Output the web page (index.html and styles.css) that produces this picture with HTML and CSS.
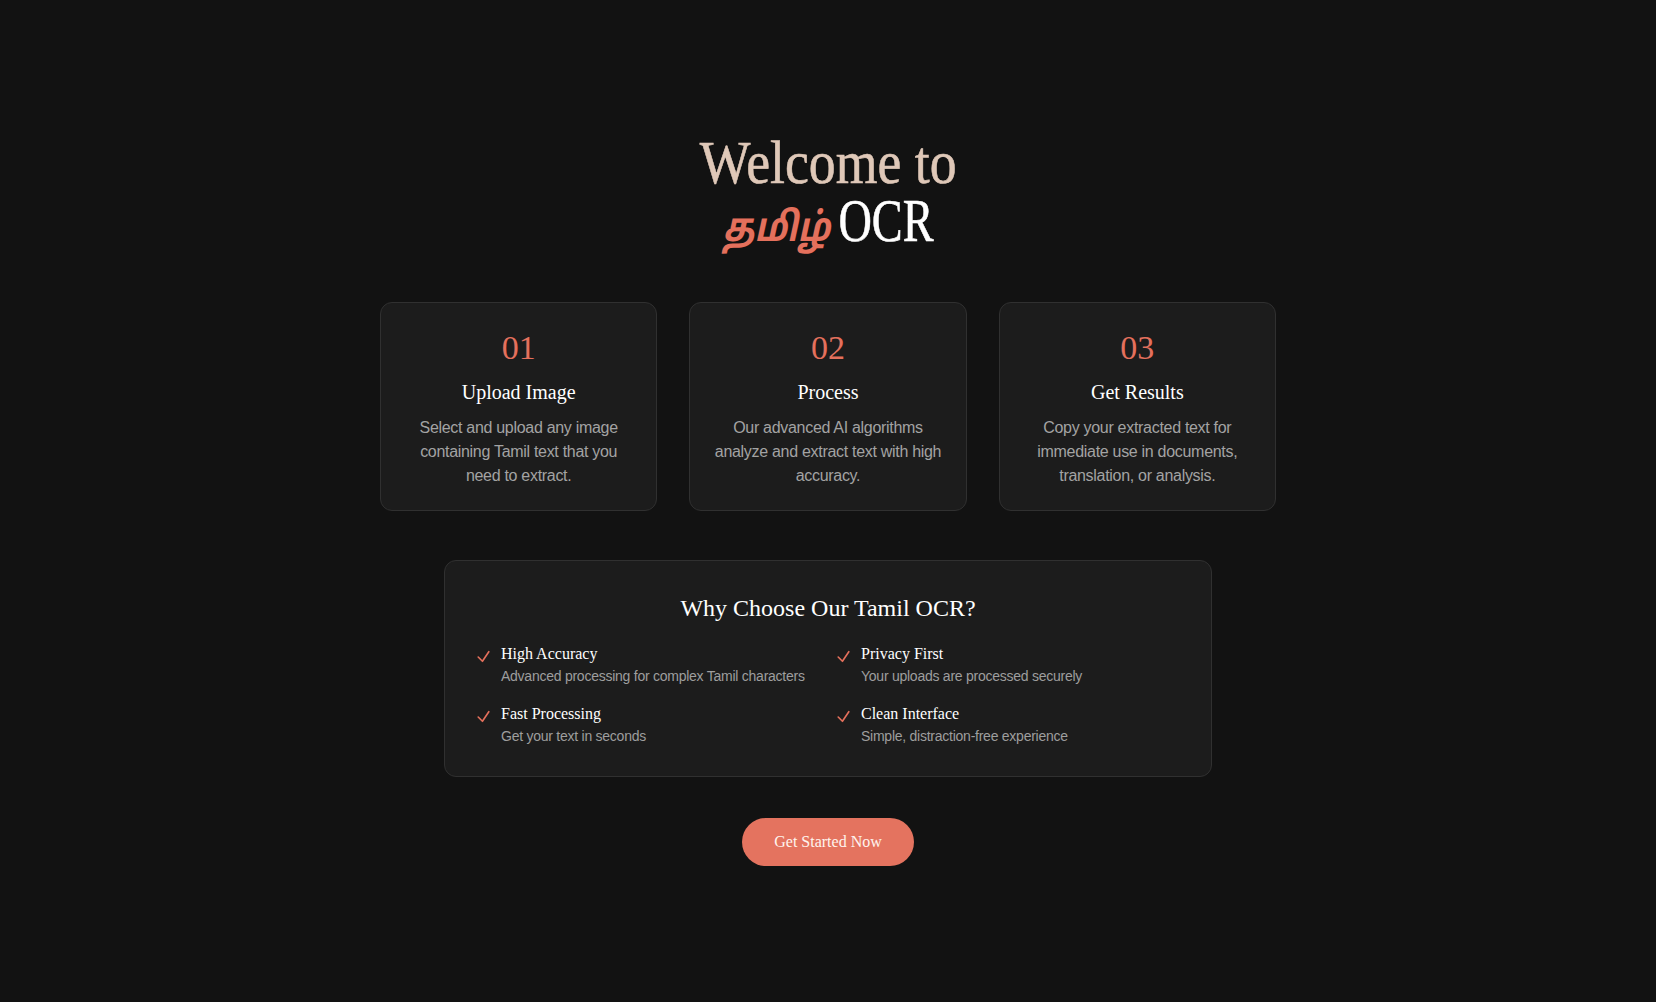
FILE: index.html
```html
<!DOCTYPE html>
<html lang="en">
<head>
<meta charset="utf-8">
<title>Tamil OCR</title>
<link rel="stylesheet" href="styles.css">
</head>
<body>
<main class="page">
  <h1 class="hero">
    <span class="hero-line hero-welcome">Welcome to</span>
    <span class="hero-line"><span class="tamil">தமிழ்</span><span class="ocr">OCR</span></span>
  </h1>

  <section class="steps">
    <div class="step">
      <div class="step-num">01</div>
      <h3 class="step-title">Upload Image</h3>
      <p class="step-text">Select and upload any image containing Tamil text that you need to extract.</p>
    </div>
    <div class="step">
      <div class="step-num">02</div>
      <h3 class="step-title">Process</h3>
      <p class="step-text">Our advanced AI algorithms analyze and extract text with high accuracy.</p>
    </div>
    <div class="step">
      <div class="step-num">03</div>
      <h3 class="step-title">Get Results</h3>
      <p class="step-text">Copy your extracted text for immediate use in documents, translation, or analysis.</p>
    </div>
  </section>

  <section class="why">
    <h2 class="why-title">Why Choose Our Tamil OCR?</h2>
    <div class="why-grid">
      <div class="feature">
        <svg class="check" viewBox="0 0 24 24"><path d="M4.5 12.75l6 6 9-13.5"/></svg>
        <div>
          <div class="feature-title">High Accuracy</div>
          <div class="feature-text">Advanced processing for complex Tamil characters</div>
        </div>
      </div>
      <div class="feature">
        <svg class="check" viewBox="0 0 24 24"><path d="M4.5 12.75l6 6 9-13.5"/></svg>
        <div>
          <div class="feature-title">Privacy First</div>
          <div class="feature-text">Your uploads are processed securely</div>
        </div>
      </div>
      <div class="feature">
        <svg class="check" viewBox="0 0 24 24"><path d="M4.5 12.75l6 6 9-13.5"/></svg>
        <div>
          <div class="feature-title">Fast Processing</div>
          <div class="feature-text">Get your text in seconds</div>
        </div>
      </div>
      <div class="feature">
        <svg class="check" viewBox="0 0 24 24"><path d="M4.5 12.75l6 6 9-13.5"/></svg>
        <div>
          <div class="feature-title">Clean Interface</div>
          <div class="feature-text">Simple, distraction-free experience</div>
        </div>
      </div>
    </div>
  </section>

  <div class="cta-wrap">
    <button class="cta">Get Started Now</button>
  </div>
</main>
</body>
</html>
```

FILE: styles.css
```css
* { box-sizing: border-box; }

html, body {
  margin: 0;
  padding: 0;
  background: #121212;
}

body {
  font-family: "Liberation Serif", "Times New Roman", serif;
  color: #f5f5f5;
}

.page {
  padding-top: 133px;
  display: flex;
  flex-direction: column;
  align-items: center;
}

.hero {
  margin: 0 0 53px;
  font-weight: 400;
  text-align: center;
  font-size: 62px;
  line-height: 58px;
}

.hero-line {
  display: block;
  height: 58px;
  white-space: nowrap;
  transform: scaleX(0.867);
  -webkit-text-stroke: 0.6px currentColor;
}

.hero-welcome {
  color: #dfc8b8;
}

.tamil {
  display: inline-block;
  line-height: 44px;
  font-family: "Noto Sans Tamil", "Lohit Tamil", "Noto Serif Tamil", "Noto Sans", sans-serif;
  font-style: italic;
  font-weight: 700;
  font-size: 40px;
  color: #e4705c;
  -webkit-text-stroke: 0;
}

.ocr {
  display: inline-block;
  line-height: 50px;
  margin-left: 10px;
  margin-right: -18px;
  color: #ffffff;
  transform: scaleX(0.86);
  transform-origin: left center;
}

.steps {
  width: 896px;
  display: grid;
  grid-template-columns: repeat(3, 1fr);
  gap: 32px;
}

.step {
  background: #1c1c1c;
  border: 1px solid #303030;
  border-radius: 12px;
  padding: 25px 22px 22px;
  text-align: center;
}

.step-num {
  font-size: 34px;
  line-height: 40px;
  color: #e4705c;
  margin-bottom: 10px;
}

.step-title {
  margin: 0 0 10px;
  font-size: 20px;
  line-height: 28px;
  font-weight: 400;
  color: #ffffff;
}

.step-text {
  margin: 0;
  font-family: "Liberation Sans", Arial, sans-serif;
  font-size: 16px;
  line-height: 24px;
  letter-spacing: -0.3px;
  color: #a3a3a3;
}

.why {
  width: 768px;
  margin-top: 49px;
  background: #1c1c1c;
  border: 1px solid #303030;
  border-radius: 12px;
  padding: 31px 31px 30px;
}

.why-title {
  margin: 0 0 18px;
  text-align: center;
  font-size: 24px;
  line-height: 32px;
  font-weight: 400;
  color: #ffffff;
}

.why-grid {
  display: grid;
  grid-template-columns: 1fr 1fr;
  column-gap: 16px;
  row-gap: 16px;
}

.feature {
  display: flex;
  align-items: flex-start;
  gap: 8px;
  margin-left: -1px;
}

.check {
  width: 17px;
  height: 17px;
  flex: none;
  margin-top: 6px;
  margin-right: 1px;
  fill: none;
  stroke: #e4705c;
  stroke-width: 2.3;
  stroke-linecap: round;
  stroke-linejoin: round;
}

.feature-title {
  font-size: 16px;
  line-height: 24px;
  color: #ffffff;
}

.feature-text {
  font-family: "Liberation Sans", Arial, sans-serif;
  font-size: 14px;
  line-height: 20px;
  letter-spacing: -0.25px;
  color: #9e9e9e;
}

.cta-wrap {
  margin-top: 41px;
}

.cta {
  font-family: "Liberation Serif", "Times New Roman", serif;
  font-size: 16px;
  line-height: 24px;
  padding: 12px 32px;
  border: none;
  border-radius: 999px;
  background: #e4735f;
  color: #fff3ee;
  cursor: pointer;
}
```
